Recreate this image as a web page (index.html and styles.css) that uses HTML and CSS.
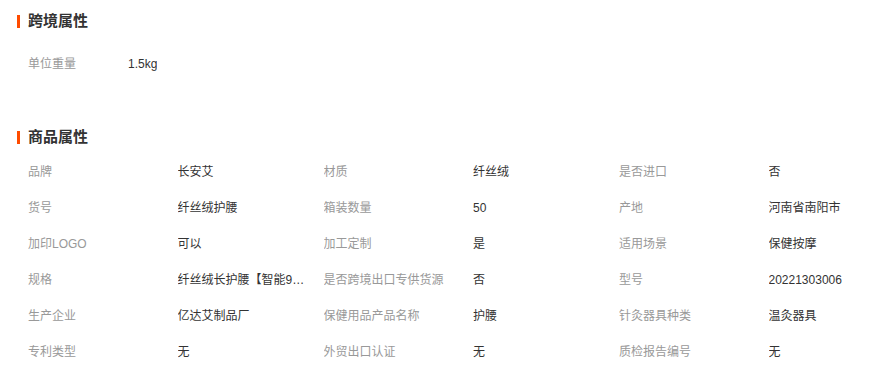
FILE: index.html
```html
<!DOCTYPE html>
<html lang="zh-CN">
<head>
<meta charset="utf-8">
<title>属性</title>
<link rel="stylesheet" href="styles.css">
</head>
<body>
<div class="page">
  <section class="section">
    <h2 class="section-title"><span class="bar"></span>跨境属性</h2>
    <div class="simple-row">
      <span class="label short">单位重量</span>
      <span class="value">1.5kg</span>
    </div>
  </section>
  <section class="section second">
    <h2 class="section-title"><span class="bar"></span>商品属性</h2>
    <div class="grid">
      <span class="label">品牌</span><span class="value">长安艾</span>
      <span class="label">材质</span><span class="value">纤丝绒</span>
      <span class="label">是否进口</span><span class="value">否</span>

      <span class="label">货号</span><span class="value">纤丝绒护腰</span>
      <span class="label">箱装数量</span><span class="value">50</span>
      <span class="label">产地</span><span class="value">河南省南阳市</span>

      <span class="label">加印LOGO</span><span class="value">可以</span>
      <span class="label">加工定制</span><span class="value">是</span>
      <span class="label">适用场景</span><span class="value">保健按摩</span>

      <span class="label">规格</span><span class="value">纤丝绒长护腰【智能9档温控】</span>
      <span class="label">是否跨境出口专供货源</span><span class="value">否</span>
      <span class="label">型号</span><span class="value">20221303006</span>

      <span class="label">生产企业</span><span class="value">亿达艾制品厂</span>
      <span class="label">保健用品产品名称</span><span class="value">护腰</span>
      <span class="label">针灸器具种类</span><span class="value">温灸器具</span>

      <span class="label">专利类型</span><span class="value">无</span>
      <span class="label">外贸出口认证</span><span class="value">无</span>
      <span class="label">质检报告编号</span><span class="value">无</span>
    </div>
  </section>
</div>
</body>
</html>
```

FILE: styles.css
```css
html, body {
  margin: 0;
  padding: 0;
  background: #ffffff;
}

body {
  font-family: "Liberation Sans", "Noto Sans CJK SC", sans-serif;
  font-size: 12px;
  color: #333333;
  overflow: hidden;
}

.page {
  width: 885px;
  overflow: hidden;
}

.section-title {
  display: flex;
  align-items: center;
  gap: 8px;
  height: 20px;
  margin: 11px 0 0 17px;
  font-size: 15px;
  font-weight: bold;
  color: #333333;
  line-height: 20px;
}

.bar {
  display: block;
  width: 3px;
  height: 13px;
  background: #ff4c00;
}

.simple-row {
  display: flex;
  margin: 15px 0 0 28px;
  height: 36px;
  line-height: 36px;
}

.label {
  color: #999999;
  white-space: nowrap;
  overflow: hidden;
}

.label.short {
  width: 100px;
}

.value {
  color: #333333;
  white-space: nowrap;
  overflow: hidden;
  text-overflow: ellipsis;
  margin-right: 18px;
}

.second .section-title {
  margin-top: 45px;
}

.grid {
  display: grid;
  grid-template-columns: 149.5px 146px 149.5px 146px 149.5px 146px;
  grid-auto-rows: 36px;
  line-height: 36px;
  margin: 7px 0 0 28px;
}
```
